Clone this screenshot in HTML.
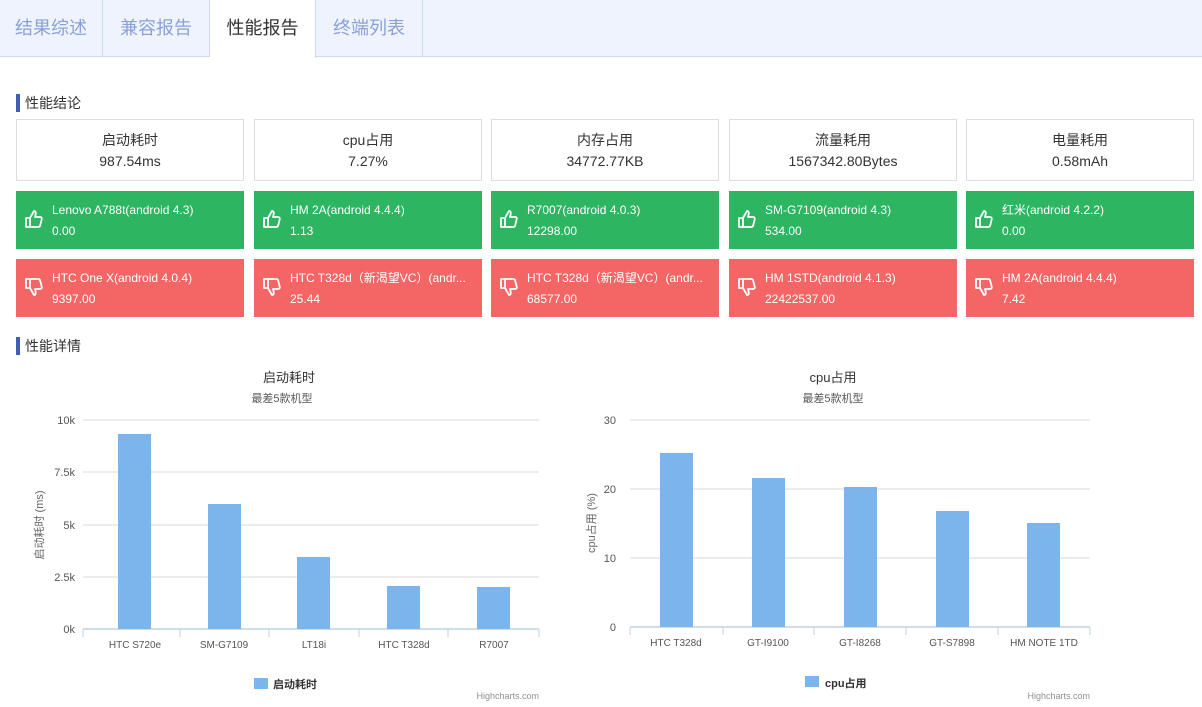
<!DOCTYPE html>
<html><head><meta charset="utf-8"><style>
*{margin:0;padding:0;box-sizing:border-box}
body{width:1202px;height:707px;background:#fff;font-family:"Liberation Sans","Noto Sans CJK SC",sans-serif;position:relative;overflow:hidden;color:#333}
.tabs{position:absolute;left:0;top:0;width:1202px;height:57px;background:#eef3fd;border-bottom:1px solid #cfdaf0}
.tab{position:absolute;top:0;height:57px;line-height:57px;text-align:center;font-size:18px;color:#8aa0d8;border-right:1px solid #cfdaf0}
.tab.a{background:#fff;color:#333;height:58px}
.h{position:absolute;left:16px;font-size:14px;color:#333;border-left:4px solid #3f5fb5;padding-left:5px;height:18px;line-height:18px}
.c{position:absolute;width:228px;height:62px;border:1px solid #ddd;text-align:center;font-size:14px;line-height:21px;padding-top:10px}
.g,.r{position:absolute;width:228px;height:58px;color:#fff;font-size:12px;padding-left:36px}
.g{background:#2db562}.r{background:#f46666}
.g div,.r div{line-height:21px;white-space:nowrap;overflow:hidden}
.g svg,.r svg{position:absolute;left:8px;top:18px}
</style></head><body>
<div class="tabs">
<div class="tab" style="left:0;width:103px">结果综述</div>
<div class="tab" style="left:103px;width:107px">兼容报告</div>
<div class="tab a" style="left:210px;width:106px">性能报告</div>
<div class="tab" style="left:316px;width:107px">终端列表</div>
</div>
<div class="h" style="top:94px">性能结论</div>
<div class="h" style="top:337px">性能详情</div>

<div class="c" style="left:16px;top:119px">启动耗时<br>987.54ms</div>
<div class="c" style="left:254px;top:119px">cpu占用<br>7.27%</div>
<div class="c" style="left:491px;top:119px">内存占用<br>34772.77KB</div>
<div class="c" style="left:729px;top:119px">流量耗用<br>1567342.80Bytes</div>
<div class="c" style="left:966px;top:119px">电量耗用<br>0.58mAh</div>

<svg width="0" height="0" style="position:absolute"><defs>
<symbol id="up" viewBox="0 0 20 20"><path d="M2 9h4v9H2zM6 9l4-7c2 0 2 2 1.5 4l-.5 2h5c1.5 0 2 1 1.7 2.3l-1.5 6C16 17.5 15 18 14 18H6" fill="none" stroke="#fff" stroke-width="1.8" stroke-linejoin="round"/></symbol>
<symbol id="dn" viewBox="0 0 20 20"><path d="M2 2h4v9H2zM6 11l4 7c2 0 2-2 1.5-4l-.5-2h5c1.5 0 2-1 1.7-2.3l-1.5-6C16 2.5 15 2 14 2H6" fill="none" stroke="#fff" stroke-width="1.8" stroke-linejoin="round"/></symbol>
</defs></svg>

<div class="g" style="left:16px;top:191px;padding-top:9px"><svg width="20" height="20"><use href="#up"/></svg><div>Lenovo A788t(android 4.3)</div><div>0.00</div></div>
<div class="g" style="left:254px;top:191px;padding-top:9px"><svg width="20" height="20"><use href="#up"/></svg><div>HM 2A(android 4.4.4)</div><div>1.13</div></div>
<div class="g" style="left:491px;top:191px;padding-top:9px"><svg width="20" height="20"><use href="#up"/></svg><div>R7007(android 4.0.3)</div><div>12298.00</div></div>
<div class="g" style="left:729px;top:191px;padding-top:9px"><svg width="20" height="20"><use href="#up"/></svg><div>SM-G7109(android 4.3)</div><div>534.00</div></div>
<div class="g" style="left:966px;top:191px;padding-top:9px"><svg width="20" height="20"><use href="#up"/></svg><div>红米(android 4.2.2)</div><div>0.00</div></div>

<div class="r" style="left:16px;top:259px;padding-top:9px"><svg width="20" height="20"><use href="#dn"/></svg><div>HTC One X(android 4.0.4)</div><div>9397.00</div></div>
<div class="r" style="left:254px;top:259px;padding-top:9px"><svg width="20" height="20"><use href="#dn"/></svg><div>HTC T328d（新渴望VC）(andr...</div><div>25.44</div></div>
<div class="r" style="left:491px;top:259px;padding-top:9px"><svg width="20" height="20"><use href="#dn"/></svg><div>HTC T328d（新渴望VC）(andr...</div><div>68577.00</div></div>
<div class="r" style="left:729px;top:259px;padding-top:9px"><svg width="20" height="20"><use href="#dn"/></svg><div>HM 1STD(android 4.1.3)</div><div>22422537.00</div></div>
<div class="r" style="left:966px;top:259px;padding-top:9px"><svg width="20" height="20"><use href="#dn"/></svg><div>HM 2A(android 4.4.4)</div><div>7.42</div></div>

<svg width="1202" height="707" style="position:absolute;left:0;top:0" font-family="Liberation Sans,Noto Sans CJK SC,sans-serif">
<g font-size="11" fill="#555">
<text x="289" y="382" text-anchor="middle" font-size="13" fill="#333">启动耗时</text>
<text x="282" y="402" text-anchor="middle" fill="#555">最差5款机型</text>
<g stroke="#d8d8d8"><line x1="83" y1="420" x2="539" y2="420"/><line x1="83" y1="472" x2="539" y2="472"/><line x1="83" y1="525" x2="539" y2="525"/><line x1="83" y1="577" x2="539" y2="577"/></g>
<line x1="83" y1="629" x2="539" y2="629" stroke="#c0d0e0" stroke-width="1.5"/>
<g stroke="#c0d0e0"><line x1="83" y1="629" x2="83" y2="637"/><line x1="180" y1="629" x2="180" y2="637"/><line x1="269" y1="629" x2="269" y2="637"/><line x1="359" y1="629" x2="359" y2="637"/><line x1="448" y1="629" x2="448" y2="637"/><line x1="539" y1="629" x2="539" y2="637"/></g>
<g text-anchor="end"><text x="75" y="424">10k</text><text x="75" y="476">7.5k</text><text x="75" y="529">5k</text><text x="75" y="581">2.5k</text><text x="75" y="633">0k</text></g>
<g fill="#7cb5ec"><rect x="118" y="434" width="33" height="195"/><rect x="208" y="504" width="33" height="125"/><rect x="297" y="557" width="33" height="72"/><rect x="387" y="586" width="33" height="43"/><rect x="477" y="587" width="33" height="42"/></g>
<g text-anchor="middle" font-size="10"><text x="135" y="648">HTC S720e</text><text x="224" y="648">SM-G7109</text><text x="314" y="648">LT18i</text><text x="404" y="648">HTC T328d</text><text x="494" y="648">R7007</text></g>
<text transform="translate(43 525) rotate(-90)" text-anchor="middle" font-size="11" fill="#666">启动耗时 (ms)</text>
<rect x="254" y="678" width="14" height="11" fill="#7cb5ec"/><text x="273" y="688" font-weight="bold" fill="#333">启动耗时</text>
<text x="539" y="699" text-anchor="end" font-size="9" fill="#909090">Highcharts.com</text>

<text x="833" y="382" text-anchor="middle" font-size="13" fill="#333">cpu占用</text>
<text x="833" y="402" text-anchor="middle">最差5款机型</text>
<g stroke="#d8d8d8"><line x1="630" y1="420" x2="1090" y2="420"/><line x1="630" y1="489" x2="1090" y2="489"/><line x1="630" y1="558" x2="1090" y2="558"/></g>
<line x1="630" y1="627" x2="1090" y2="627" stroke="#c0d0e0" stroke-width="1.5"/>
<g stroke="#c0d0e0"><line x1="630" y1="627" x2="630" y2="635"/><line x1="723" y1="627" x2="723" y2="635"/><line x1="814" y1="627" x2="814" y2="635"/><line x1="906" y1="627" x2="906" y2="635"/><line x1="998" y1="627" x2="998" y2="635"/><line x1="1090" y1="627" x2="1090" y2="635"/></g>
<g text-anchor="end"><text x="616" y="424">30</text><text x="616" y="493">20</text><text x="616" y="562">10</text><text x="616" y="631">0</text></g>
<g fill="#7cb5ec"><rect x="660" y="453" width="33" height="174"/><rect x="752" y="478" width="33" height="149"/><rect x="844" y="487" width="33" height="140"/><rect x="936" y="511" width="33" height="116"/><rect x="1027" y="523" width="33" height="104"/></g>
<g text-anchor="middle" font-size="10"><text x="676" y="646">HTC T328d</text><text x="768" y="646">GT-I9100</text><text x="860" y="646">GT-I8268</text><text x="952" y="646">GT-S7898</text><text x="1044" y="646">HM NOTE 1TD</text></g>
<text transform="translate(595 523) rotate(-90)" text-anchor="middle" font-size="11" fill="#666">cpu占用 (%)</text>
<rect x="805" y="676" width="14" height="11" fill="#7cb5ec"/><text x="825" y="687" font-weight="bold" fill="#333">cpu占用</text>
<text x="1090" y="699" text-anchor="end" font-size="9" fill="#909090">Highcharts.com</text>
</g></svg>
</body></html>
